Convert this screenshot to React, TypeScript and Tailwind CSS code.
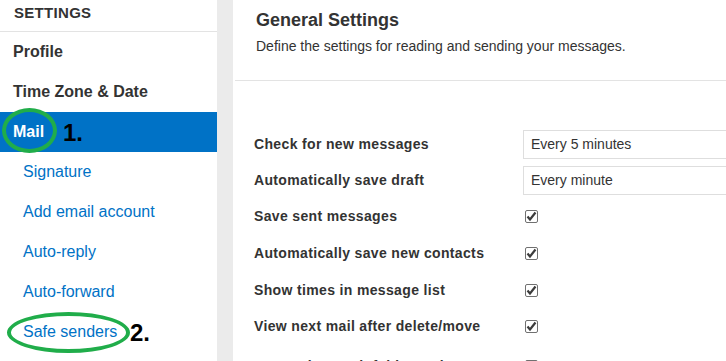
import React from 'react'

const font = { fontFamily: '"Liberation Sans", Arial, sans-serif' }

const mainItems = ['Profile', 'Time Zone & Date']
const subItems = ['Signature', 'Add email account', 'Auto-reply', 'Auto-forward', 'Safe senders']

type Row = { label: string; select?: string; checked?: boolean; h: string }

const rows: Row[] = [
    { label: 'Check for new messages', select: 'Every 5 minutes', h: 'h-[36px]' },
    { label: 'Automatically save draft', select: 'Every minute', h: 'h-[36px]' },
    { label: 'Save sent messages', checked: true, h: 'h-[37px]' },
    { label: 'Automatically save new contacts', checked: true, h: 'h-[37px]' },
    { label: 'Show times in message list', checked: true, h: 'h-[36px]' },
    { label: 'View next mail after delete/move', checked: true, h: 'h-[37px]' },
    { label: 'Empty the Trash folder on logout', checked: false, h: 'h-[42px]' },
]

const Checkbox = ({ checked }: { checked?: boolean }) => (
    <span className="flex h-[13px] w-[13px] items-center justify-center rounded-[2px] border border-[#707070] bg-white">
        {checked && (
            <svg width="11" height="11" viewBox="0 0 11 11">
                <path d="M1.5 5.5 L4 8.5 L9.5 1.5" fill="none" stroke="#3c3c3c" strokeWidth="2.2" />
            </svg>
        )}
    </span>
)

const App = () => {
    return (
        <div className="flex h-[361px] w-[726px] overflow-hidden bg-white text-[#333]" style={font}>
            {/* sidebar */}
            <div className="relative w-[217px] shrink-0">
                <div className="flex h-[32px] items-center border-b border-[#e3e3e3] pb-[4px] pl-[14px] text-[15px] font-bold tracking-[0.3px]">
                    SETTINGS
                </div>
                {mainItems.map((item) => (
                    <div key={item} className="flex h-[40px] items-center pl-[13px] text-[16px] font-bold">
                        {item}
                    </div>
                ))}
                <div className="flex h-[40px] items-center bg-[#0072c6] pl-[13px] text-[16px] font-bold text-white">
                    Mail
                </div>
                {subItems.map((item) => (
                    <div key={item} className="flex h-[40px] items-center pl-[23px] text-[16px] text-[#0072c6]">
                        {item}
                    </div>
                ))}

                {/* annotations */}
                <div className="absolute left-[2px] top-[108px] h-[45px] w-[55px] rounded-[50%] border-[4px] border-[#20ad4a]" />
                <div className="absolute left-[63px] top-[118px] text-[24px] font-bold leading-[30px] text-black">1.</div>
                <div className="absolute left-[7px] top-[312px] h-[41px] w-[123px] rounded-[50%] border-[4px] border-[#20ad4a]" />
                <div className="absolute left-[130px] top-[318px] text-[24px] font-bold leading-[30px] text-black">2.</div>
            </div>

            {/* divider column */}
            <div className="w-[16px] shrink-0 bg-[#ebebeb]" />

            {/* main panel */}
            <div className="flex-1">
                <div className="ml-[2px] h-[81px] border-b border-[#e3e3e3] pl-[21px] pt-[10px]">
                    <h1 className="text-[18px] font-bold leading-[20px]">General Settings</h1>
                    <p className="mt-[8px] text-[14px] leading-[17px]">Define the settings for reading and sending your messages.</p>
                </div>
                <div className="pl-[21px] pt-[45px]">
                    {rows.map((row) => (
                        <div key={row.label} className={`flex items-center ${row.h}`}>
                            <div className="w-[269px] shrink-0 text-[14px] font-bold tracking-[0.35px]">{row.label}</div>
                            {row.select ? (
                                <div className="flex h-[29px] w-[260px] shrink-0 items-center border border-[#dedede] pl-[7px] text-[14px]">
                                    {row.select}
                                </div>
                            ) : (
                                <div className="pl-[2px]">
                                    <Checkbox checked={row.checked} />
                                </div>
                            )}
                        </div>
                    ))}
                </div>
            </div>
        </div>
    )
}

export default App
